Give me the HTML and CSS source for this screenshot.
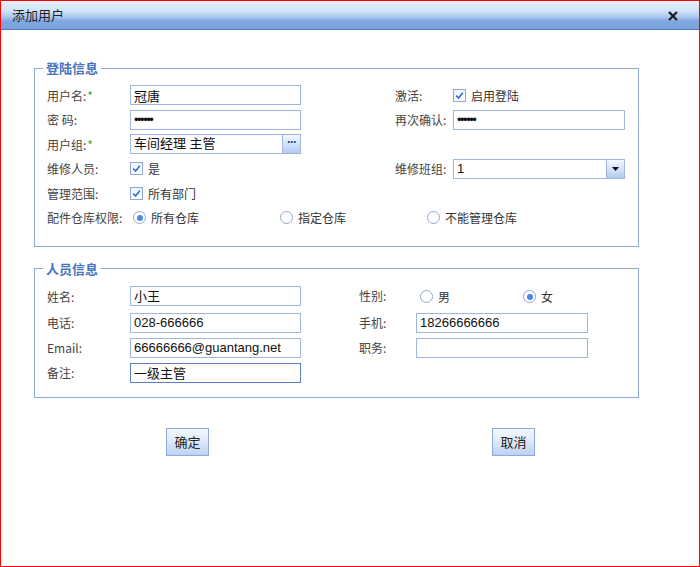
FILE: index.html
```html
<!DOCTYPE html>
<html lang="zh">
<head>
<meta charset="utf-8">
<title>添加用户</title>
<link rel="stylesheet" href="styles.css">
</head>
<body>
<div class="window">
  <div class="titlebar">
    <span class="title">添加用户</span>
    <svg class="close" width="10" height="10" viewBox="0 0 10 10"><path d="M1.8 1.8 L8.2 8.2 M8.2 1.8 L1.8 8.2" stroke="#1a1a1a" stroke-width="2.2" stroke-linecap="square"/></svg>
  </div>
  <div class="content">
    <fieldset class="group g1">
      <legend>登陆信息</legend>
      <div class="grid1">
        <span class="lbl">用户名:<span class="req">*</span></span>
        <input class="txt" value="冠唐">
        <span></span>
        <span class="lbl">激活:</span>
        <span class="opt"><span class="check"><svg width="9" height="9" viewBox="0 0 9 9"><path d="M1.2 4.6 L3.6 7 L7.8 1.8" fill="none" stroke="#2f6fd0" stroke-width="1.6"/></svg></span>启用登陆</span>

        <span class="lbl">密&nbsp;码:</span>
        <input class="txt pwd" type="password" value="123456">
        <span></span>
        <span class="lbl">再次确认:</span>
        <input class="txt pwd" type="password" value="123456">

        <span class="lbl">用户组:<span class="req">*</span></span>
        <span class="txt picker"><span class="val">车间经理 主管</span><span class="dots">···</span></span>
        <span></span><span></span><span></span>

        <span class="lbl">维修人员:</span>
        <span class="opt"><span class="check"><svg width="9" height="9" viewBox="0 0 9 9"><path d="M1.2 4.6 L3.6 7 L7.8 1.8" fill="none" stroke="#2f6fd0" stroke-width="1.6"/></svg></span>是</span>
        <span></span>
        <span class="lbl">维修班组:</span>
        <span class="txt select"><span class="val">1</span><span class="arrow"><svg width="7" height="4" viewBox="0 0 7 4"><path d="M0 0 H7 L3.5 4 Z" fill="#111"/></svg></span></span>

        <span class="lbl">管理范围:</span>
        <span class="opt"><span class="check"><svg width="9" height="9" viewBox="0 0 9 9"><path d="M1.2 4.6 L3.6 7 L7.8 1.8" fill="none" stroke="#2f6fd0" stroke-width="1.6"/></svg></span>所有部门</span>
        <span></span><span></span><span></span>

        <div class="radiorow">
          <span class="lbl">配件仓库权限:</span>
          <span class="ropt"><span class="radio on"></span>所有仓库</span>
          <span class="ropt"><span class="radio"></span>指定仓库</span>
          <span class="ropt"><span class="radio"></span>不能管理仓库</span>
        </div>
      </div>
    </fieldset>

    <fieldset class="group g2">
      <legend>人员信息</legend>
      <div class="grid2">
        <span class="lbl">姓名:</span>
        <input class="txt" value="小王">
        <span></span>
        <span class="lbl up">性别:</span>
        <span class="gender"><span class="ropt g"><span class="radio"></span>男</span><span class="ropt g"><span class="radio on"></span>女</span></span>

        <span class="lbl">电话:</span>
        <input class="txt" value="028-666666">
        <span></span>
        <span class="lbl">手机:</span>
        <input class="txt" value="18266666666">

        <span class="lbl">Email:</span>
        <input class="txt" value="66666666@guantang.net">
        <span></span>
        <span class="lbl">职务:</span>
        <input class="txt" value="">

        <span class="lbl">备注:</span>
        <input class="txt focus" value="一级主管">
        <span></span><span></span><span></span>
      </div>
    </fieldset>

    <div class="actions">
      <button class="btn">确定</button>
      <button class="btn">取消</button>
    </div>
  </div>
</div>
</body>
</html>
```

FILE: styles.css
```css
* { box-sizing: border-box; }
html, body { margin: 0; padding: 0; background: #fff; }
body {
  font-family: "Noto Sans CJK SC", "Liberation Sans", sans-serif;
  font-size: 12px;
  color: #333;
}
.window {
  width: 700px;
  height: 567px;
  border: 1px solid #ff0000;
  background: #fff;
}
.titlebar {
  height: 29px;
  border-bottom: 1px solid #4f79c0;
  background: linear-gradient(to bottom, #e6f0fd 0%, #d2e3fa 35%, #a9c5ef 58%, #7fa7df 72%, #7aa3dd 100%);
  display: flex;
  align-items: center;
  justify-content: space-between;
  padding: 0 21px 0 11px;
}
.title {
  font-size: 13px;
  color: #1e1e1e;
  line-height: 16px;
}
.close { display: block; margin-top: 2px; }

.content {
  padding: 30px 0 0 33px;
}
.group {
  width: 605px;
  margin: 0;
  border: 1px solid #8eaadb;
  padding: 9px 12px 18px 12px;
  min-width: 0;
}
.group legend {
  font-size: 13px;
  line-height: 16px;
  font-weight: bold;
  color: #4675c2;
  padding: 0 3px;
  margin-left: -4px;
}
.g2 { margin-top: 14px; padding-bottom: 14px; }

.lbl {
  color: #444;
  white-space: nowrap;
  display: flex;
  align-items: center;
}
.lbl.up { margin-top: -3px; }
.req { color: #3aa13a; margin-left: 1px; }

.grid1 {
  display: grid;
  grid-template-columns: 83px 171px 94px 58px 172px;
  grid-auto-rows: 20px;
  row-gap: 4.6px;
  align-items: stretch;
}
.grid2 {
  display: grid;
  grid-template-columns: 83px 171px 58px 57px 172px;
  grid-template-rows: 22px 20px 20px 20px;
  row-gap: 5px;
}

.txt {
  height: 20px;
  border: 1px solid #9fb6e2;
  background: #fff;
  font-family: "Liberation Sans", "Noto Sans CJK SC", sans-serif;
  font-size: 13px;
  color: #111;
  padding: 0 3px;
  margin: 0;
  outline: none;
  width: 100%;
}
.txt.focus { border-color: #5c7fc4; }
.pwd { font-size: 13px; letter-spacing: -1.5px; }

.picker, .select {
  display: flex;
  align-items: center;
  padding: 0 0 0 3px;
}
.picker .val, .select .val { flex: 1; line-height: 18px; }
.dots {
  width: 18px;
  height: 18px;
  border-left: 1px solid #9fb6e2;
  background: linear-gradient(to bottom, #f3f8ff 0%, #d3e3f9 50%, #b3cbef 100%);
  color: #1d3f7a;
  font-size: 12px;
  font-weight: bold;
  line-height: 15px;
  text-align: center;
  letter-spacing: -1px;
}
.arrow {
  width: 18px;
  height: 18px;
  border-left: 1px solid #9fb6e2;
  background: linear-gradient(to bottom, #f3f8ff 0%, #d3e3f9 50%, #b3cbef 100%);
  display: flex;
  align-items: center;
  justify-content: center;
}

.opt {
  display: flex;
  align-items: center;
  color: #333;
}
.check {
  width: 13px;
  height: 13px;
  border: 1px solid #8ea8d8;
  background: linear-gradient(to bottom, #eef4fd, #fff);
  margin-right: 5px;
  display: flex;
  align-items: center;
  justify-content: center;
}
.check svg { display: block; }

.radiorow {
  grid-column: 1 / -1;
  display: flex;
  align-items: center;
}
.radiorow .lbl { width: 83px; }
.ropt {
  display: flex;
  align-items: center;
  width: 147px;
  padding-left: 3px;
  color: #333;
  flex: none;
}
.radio {
  width: 13px;
  height: 13px;
  border-radius: 50%;
  border: 1px solid #8ea8d8;
  background: #fff;
  margin-right: 5px;
  position: relative;
  flex: none;
}
.radio.on::after {
  content: "";
  position: absolute;
  left: 2.5px;
  top: 2.5px;
  width: 6px;
  height: 6px;
  border-radius: 50%;
  background: #4a88e2;
}
.gender { display: flex; align-items: center; }
.ropt.g { width: 103px; padding-left: 4px; }

.actions {
  display: flex;
  padding: 30px 0 0 132px;
  gap: 283px;
}
.btn {
  width: 43px;
  height: 28px;
  border: 1px solid #8eaadb;
  background: linear-gradient(to bottom, #f3f8ff 0%, #dfeafb 45%, #bcd2f2 100%);
  font-family: "Noto Sans CJK SC", sans-serif;
  font-size: 13px;
  color: #222;
  padding: 0;
  margin: 0;
}
```
